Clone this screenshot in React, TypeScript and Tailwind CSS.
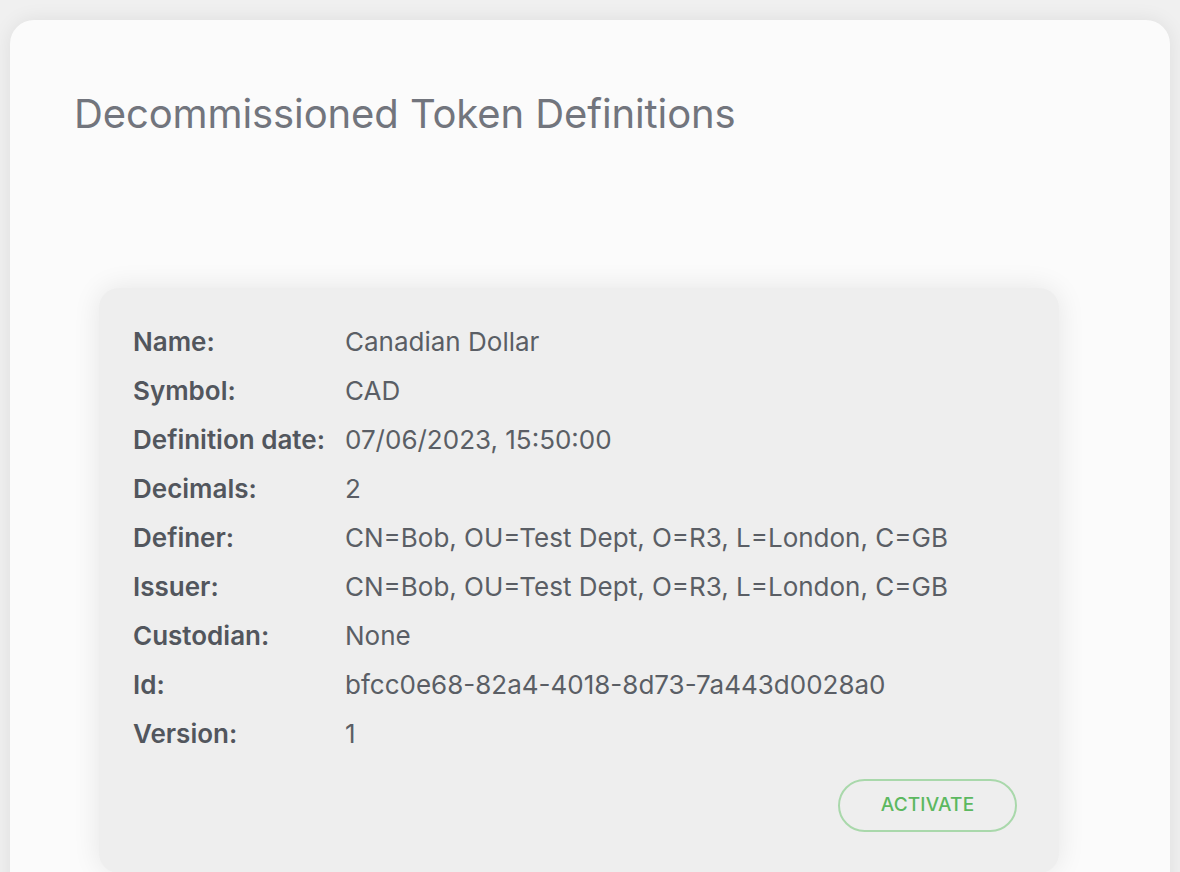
const rows = [
  { label: "Name:", value: "Canadian Dollar" },
  { label: "Symbol:", value: "CAD" },
  { label: "Definition date:", value: "07/06/2023, 15:50:00" },
  { label: "Decimals:", value: "2" },
  { label: "Definer:", value: "CN=Bob, OU=Test Dept, O=R3, L=London, C=GB" },
  { label: "Issuer:", value: "CN=Bob, OU=Test Dept, O=R3, L=London, C=GB" },
  { label: "Custodian:", value: "None" },
  { label: "Id:", value: "bfcc0e68-82a4-4018-8d73-7a443d0028a0" },
  { label: "Version:", value: "1" },
];

export default function App() {
  return (
    <div className="min-h-screen h-[872px] overflow-hidden bg-[#f0f0f0] pt-5 pl-[10px] pr-[10px] font-['Inter',sans-serif]">
      {/* Outer panel */}
      <section className="h-[900px] rounded-[24px] bg-[#fbfbfb] shadow-[0_0_20px_rgba(0,0,0,0.08)] px-16 pt-[74px]">
        <h1 className="text-[40px] leading-none font-normal text-[#72757d] tracking-[-0.1px]">
          Decommissioned Token Definitions
        </h1>

        {/* Token card */}
        <div className="mt-[154px] ml-[25px] w-[960px] rounded-[20px] bg-[#eeeeee] shadow-[0_0_28px_rgba(0,0,0,0.09)] pl-[34px] pr-[42px] pt-[29px] pb-[41px]">
          <div className="grid grid-cols-[212px_1fr]">
            {rows.map((row, i) => (
              <div key={i} className="contents">
                <div className="text-[26px] leading-[49px] font-semibold text-[#52565d]">{row.label}</div>
                <div className="text-[26px] leading-[49px] text-[#5a5e65]">{row.value}</div>
              </div>
            ))}
          </div>
          <div className="mt-[21px] flex justify-end">
            <button className="h-[53px] w-[179px] rounded-full border-2 border-[#a9d8ab] text-[19px] font-medium tracking-[0.2px] text-[#5cb860]">
              ACTIVATE
            </button>
          </div>
        </div>
      </section>
    </div>
  );
}
